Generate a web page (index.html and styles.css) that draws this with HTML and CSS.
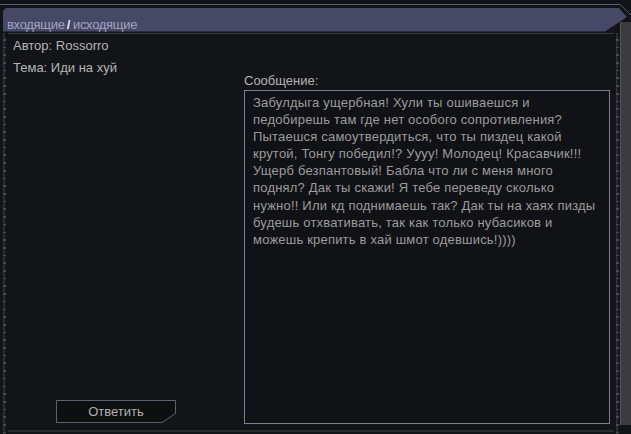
FILE: index.html
```html
<!DOCTYPE html>
<html lang="ru">
  <head>
    <meta charset="UTF-8" />
    <title>Сообщение</title>
    <link rel="stylesheet" href="styles.css">
  </head>
  <body>
    <main class="window">
      <header class="head">
        <svg class="head-bg" width="631" height="33" viewBox="0 0 631 33">
          <polyline points="0,4.5 620,4.5 631,15" fill="none" stroke="#5c5e72" stroke-width="1" />
          <polygon points="3,11 6,8 619,8 627,17 605,31.5 3,31.5" fill="#474766" />
        </svg>
        <span class="tab">входящие</span><span class="sep">/</span><span class="tab">исходящие</span>
      </header>

      <div class="body">
        <div class="rail left"></div>
        <section class="frame">
          <div class="side">
            <p class="meta">Автор: Rossorro</p>
            <p class="meta">Тема: Иди на хуй</p>
            <button class="btn">
              <svg class="btn-edge" width="120" height="23" viewBox="0 0 120 23">
                <polygon points="0.5,0.5 119.5,0.5 119.5,13.5 106,22.5 0.5,22.5" fill="#0e0f11" stroke="#5e5f70" />
              </svg>
              <span>Ответить</span>
            </button>
          </div>
          <div class="msg">
            <p class="label">Сообщение:</p>
            <div class="text">Забулдыга ущербная! Хули ты ошиваешся и<br>педобирешь там где нет особого сопротивления?<br>Пытаешся самоутвердиться, что ты пиздец какой<br>крутой, Тонгу победил!? Уууу! Молодец! Красавчик!!!<br>Ущерб безпантовый! Бабла что ли с меня много<br>поднял? Дак ты скажи! Я тебе переведу сколько<br>нужно!! Или кд поднимаешь так? Дак ты на хаях пизды<br>будешь отхвативать, так как только нубасиков и<br>можешь крепить в хай шмот одевшись!))))</div>
          </div>
        </section>
        <div class="rail right"></div>
        <div class="scroll"></div>
      </div>
    </main>
  </body>
</html>
```

FILE: styles.css
```css
body {
  margin: 0;
  background-color: #131417;
  font-family: 'Liberation Sans', Arial, sans-serif;
  color: #b4b4b4;
}

.window {
  width: 631px;
  height: 434px;
  display: flex;
  flex-direction: column;
  overflow: hidden;
}

.head {
  position: relative;
  height: 33px;
  flex: none;
  box-sizing: border-box;
  padding: 17px 0 0 7px;
  font-size: 13px;
  line-height: 15px;
  letter-spacing: -0.3px;
}

.head-bg {
  position: absolute;
  top: 0;
  left: 0;
  z-index: -1;
}

.tab {
  color: #a3a3bf;
}

.sep {
  color: #e8e8f0;
  font-weight: bold;
  margin: 0 3px 0 2px;
}

.body {
  flex: 1;
  display: flex;
  min-height: 0;
}

.rail {
  width: 8px;
  flex: none;
  background-image:
    repeating-linear-gradient(to bottom, transparent 0, transparent 6px, #4a4b52 6px, #4a4b52 7.7px),
    linear-gradient(#2c2d33, #2c2d33);
  background-size: 3px 100%, 2px 100%;
  background-position: 3px 0, 3px 0;
  background-repeat: no-repeat;
}

.rail.right {
  width: 6px;
  background-position: 2px 0, 2px 0;
}

.frame {
  flex: 1;
  display: flex;
  border-top: 1px solid #34353d;
  border-bottom: 2px solid #2a2b31;
  margin-bottom: 2px;
  padding: 1px 0 6px 5px;
}

.side {
  width: 231px;
  display: flex;
  flex-direction: column;
}

.meta {
  margin: 0;
  font-size: 13px;
  line-height: 22px;
}

.btn {
  position: relative;
  margin: auto 0 1px 43px;
  width: 120px;
  height: 23px;
  padding: 0;
  border: 0;
  background: none;
  font-family: inherit;
  font-size: 13px;
  color: #b0b0b0;
}

.btn-edge {
  position: absolute;
  top: 0;
  left: 0;
}

.btn span {
  position: relative;
}

.msg {
  width: 366px;
  display: flex;
  flex-direction: column;
  padding-top: 36px;
}

.label {
  margin: 0;
  font-size: 13px;
  line-height: 19px;
}

.text {
  flex: 1;
  border: 1px solid #7e7e96;
  padding: 3px 6px 0 8px;
  font-size: 13px;
  line-height: 17.1px;
  letter-spacing: 0.2px;
  color: #9c9c9c;
  white-space: nowrap;
  background-color: #111215;
}

.scroll {
  width: 11px;
  flex: none;
  margin-top: -11px;
  margin-bottom: 9px;
  background-color: #3b3b3d;
  border-left: 1px solid #56565c;
  box-sizing: border-box;
}
```
